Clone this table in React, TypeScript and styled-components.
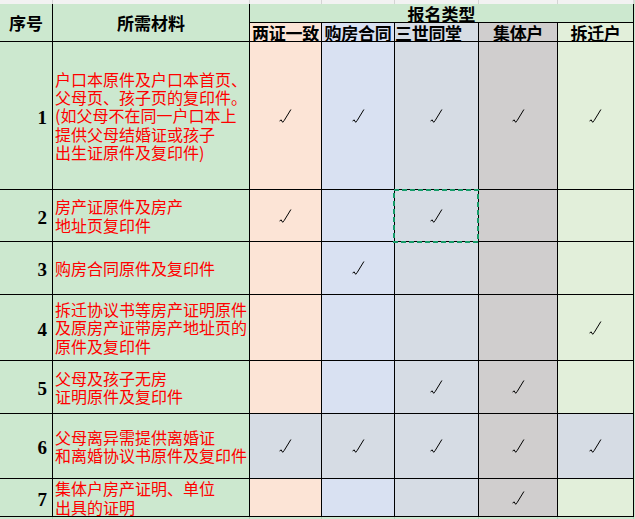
import React from 'react';
import styled, { createGlobalStyle } from 'styled-components';

const GlobalStyle = createGlobalStyle`
  html, body {
    margin: 0;
    padding: 0;
    background: #cce8cf;
  }
`;

const fills = {
  green: '#cce8cf',
  peach: '#fce4d6',
  blue: '#d9e1f2',
  slate: '#d6dce4',
  gray: '#d0cece',
  lime: '#e2efda',
};

type Fill = keyof typeof fills;

const Sheet = styled.div`
  display: grid;
  grid-template-columns: 53px 197px 72px 73px 84px 79px 76px;
  grid-template-rows: 4px 19px 19px 148px 52px 53px 66px 53px 65px 38px 2px;
  width: 634px;
  font-family: 'Noto Sans CJK SC', 'Noto Sans', sans-serif;
`;

const Strip = styled.div<{ $fill: string; $line: string }>`
  background: ${(p) => p.$fill};
  border-right: 1px solid ${(p) => p.$line};
  box-sizing: border-box;
`;

const Cell = styled.div<{ $fill?: Fill }>`
  box-sizing: border-box;
  border-right: 1px solid #000;
  border-bottom: 1px solid #000;
  background: ${(p) => fills[p.$fill ?? 'green']};
  display: flex;
  align-items: center;
  justify-content: center;
  position: relative;
`;

const HeadCell = styled(Cell)<{ $rows?: number; $cols?: number }>`
  grid-row: span ${(p) => p.$rows ?? 1};
  grid-column: span ${(p) => p.$cols ?? 1};
  font-weight: 700;
  font-size: 17px;
  line-height: 17px;
  color: #000;
  white-space: nowrap;
`;

const TypeCell = styled(Cell)<{ $left?: boolean }>`
  justify-content: ${(p) => (p.$left ? 'flex-start' : 'center')};
  font-weight: 700;
  font-size: 17px;
  line-height: 17px;
  white-space: nowrap;
  letter-spacing: -0.3px;
`;

const NumCell = styled(Cell)`
  justify-content: flex-end;
  padding: 4px 5px 0 0;
  font-family: 'Liberation Serif', serif;
  font-weight: 700;
  font-size: 19px;
`;

const ItemCell = styled(Cell)`
  justify-content: flex-start;
  padding-left: 2px;
  color: #ff0000;
  font-size: 16px;
  line-height: 18.3px;
  white-space: nowrap;
`;

// copy marquee drawn over the selected cell, overlapping its top/left lines
const Marquee = styled.svg`
  position: absolute;
  left: -2px;
  top: -1px;
  width: 86px;
  height: 54px;
  z-index: 2;
`;

const Check = () => (
  <svg width="13" height="14" viewBox="0 0 13 14">
    <polyline
      points="0.5,12.3 2,10.8 3.7,13.3 5.3,11.3 11.9,0.5"
      fill="none"
      stroke="#000"
      strokeWidth="1"
    />
  </svg>
);

const baseFills: Fill[] = ['peach', 'blue', 'slate', 'gray', 'lime'];
const splitFills: Fill[] = ['slate', 'slate', 'slate', 'gray', 'slate'];

const types = ['两证一致', '购房合同', '三世同堂', '集体户', '拆迁户'];

const rows = [
  {
    lines: [
      '户口本原件及户口本首页、',
      '父母页、孩子页的复印件。',
      '(如父母不在同一户口本上',
      '提供父母结婚证或孩子',
      '出生证原件及复印件)',
    ],
    marks: [1, 1, 1, 1, 1],
  },
  { lines: ['房产证原件及房产', '地址页复印件'], marks: [1, 0, 1, 0, 0], selected: 2 },
  { lines: ['购房合同原件及复印件'], marks: [0, 1, 0, 0, 0] },
  {
    lines: ['拆迁协议书等房产证明原件', '及原房产证带房产地址页的', '原件及复印件'],
    marks: [0, 0, 0, 0, 1],
  },
  { lines: ['父母及孩子无房', '证明原件及复印件'], marks: [0, 0, 1, 1, 0] },
  {
    lines: ['父母离异需提供离婚证', '和离婚协议书原件及复印件'],
    marks: [1, 1, 1, 1, 1],
    split: true,
  },
  { lines: ['集体户房产证明、单位', '出具的证明'], marks: [0, 0, 0, 1, 0] },
];

const App: React.FC = () => {
  return (
    <>
      <GlobalStyle />
      <Sheet>
        {Array.from({ length: 7 }, (_, i) => (
          <Strip key={`t${i}`} $fill="#f2f2f2" $line="#d4d4d4" />
        ))}

        <HeadCell $rows={2}>序号</HeadCell>
        <HeadCell $rows={2}>所需材料</HeadCell>
        <HeadCell $cols={5}>报名类型</HeadCell>
        {types.map((t, i) => (
          <TypeCell key={t} $fill={baseFills[i]} $left={i === 2}>
            {t}
          </TypeCell>
        ))}

        {rows.map((row, r) => (
          <React.Fragment key={r}>
            <NumCell>{r + 1}</NumCell>
            <ItemCell>
              <div>
                {row.lines.map((l) => (
                  <div key={l}>{l}</div>
                ))}
              </div>
            </ItemCell>
            {row.marks.map((m, c) => (
              <Cell key={c} $fill={(row.split ? splitFills : baseFills)[c]}>
                {m ? <Check /> : null}
                {row.selected === c && (
                  <Marquee viewBox="0 0 86 54">
                    <rect
                      x="1"
                      y="1"
                      width="84"
                      height="52"
                      fill="none"
                      stroke="#159a68"
                      strokeWidth="2"
                      strokeDasharray="5 3"
                    />
                  </Marquee>
                )}
              </Cell>
            ))}
          </React.Fragment>
        ))}

        {Array.from({ length: 7 }, (_, i) => (
          <Strip key={`b${i}`} $fill="#cce8cf" $line="#b8d4bb" />
        ))}
      </Sheet>
    </>
  );
};

export default App;
